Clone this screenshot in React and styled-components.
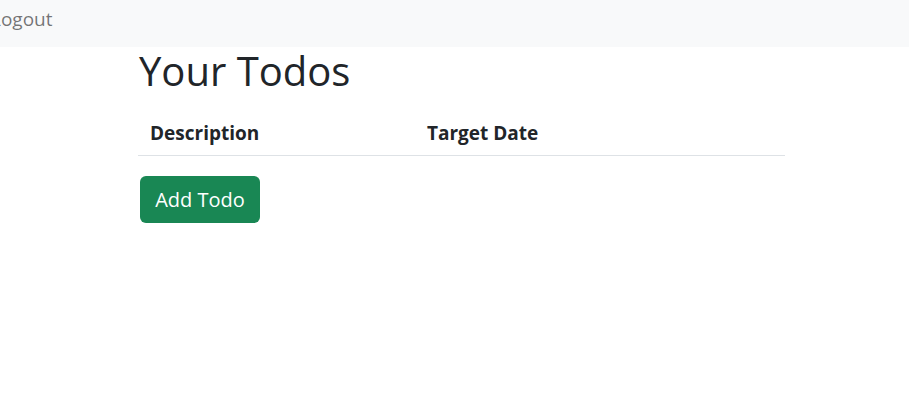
import React from "react";
import styled, { createGlobalStyle } from "styled-components";

const GlobalStyle = createGlobalStyle`
  body {
    margin: 0;
    font-family: "Open Sans", "Noto Sans", sans-serif;
    color: #212529;
    background: #fff;
    overflow: hidden;
  }
`;

const Navbar = styled.nav`
  display: flex;
  align-items: flex-start;
  height: 47px;
  padding-top: 5px;
  box-sizing: border-box;
  background-color: #f8f9fa;
  overflow: hidden;
`;

const NavLink = styled.a`
  margin-left: -9px;
  font-size: 19px;
  line-height: 28px;
  color: rgba(0, 0, 0, 0.55);
  text-decoration: none;
  cursor: pointer;
`;

const Container = styled.main`
  display: flex;
  flex-direction: column;
  align-items: flex-start;
  width: 647px;
  margin-left: 138px;
`;

const Title = styled.h1`
  margin: 0 0 0 1px;
  font-size: 40px;
  font-weight: 400;
  line-height: 48px;
`;

const Table = styled.div`
  width: 100%;
  margin-top: 15px;
`;

const HeaderRow = styled.div`
  display: grid;
  grid-template-columns: 277px 1fr;
  align-items: center;
  height: 45px;
  border-bottom: 1px solid #dee2e6;
`;

const HeaderCell = styled.div`
  padding: 0 12px;
  font-size: 19px;
  font-weight: 700;
  line-height: 28px;
`;

const Button = styled.button`
  margin-top: 20px;
  margin-left: 2px;
  width: 120px;
  height: 47px;
  padding: 0;
  font-family: inherit;
  font-size: 20px;
  line-height: 30px;
  color: #fff;
  background-color: #198754;
  border: none;
  border-radius: 6px;
  cursor: pointer;
`;

const App = () => {
  return (
    <>
      <GlobalStyle />
      <Navbar>
        <NavLink>Logout</NavLink>
      </Navbar>
      <Container>
        <Title>Your Todos</Title>
        <Table>
          <HeaderRow>
            <HeaderCell>Description</HeaderCell>
            <HeaderCell>Target Date</HeaderCell>
          </HeaderRow>
        </Table>
        <Button>Add Todo</Button>
      </Container>
    </>
  );
};

export default App;
